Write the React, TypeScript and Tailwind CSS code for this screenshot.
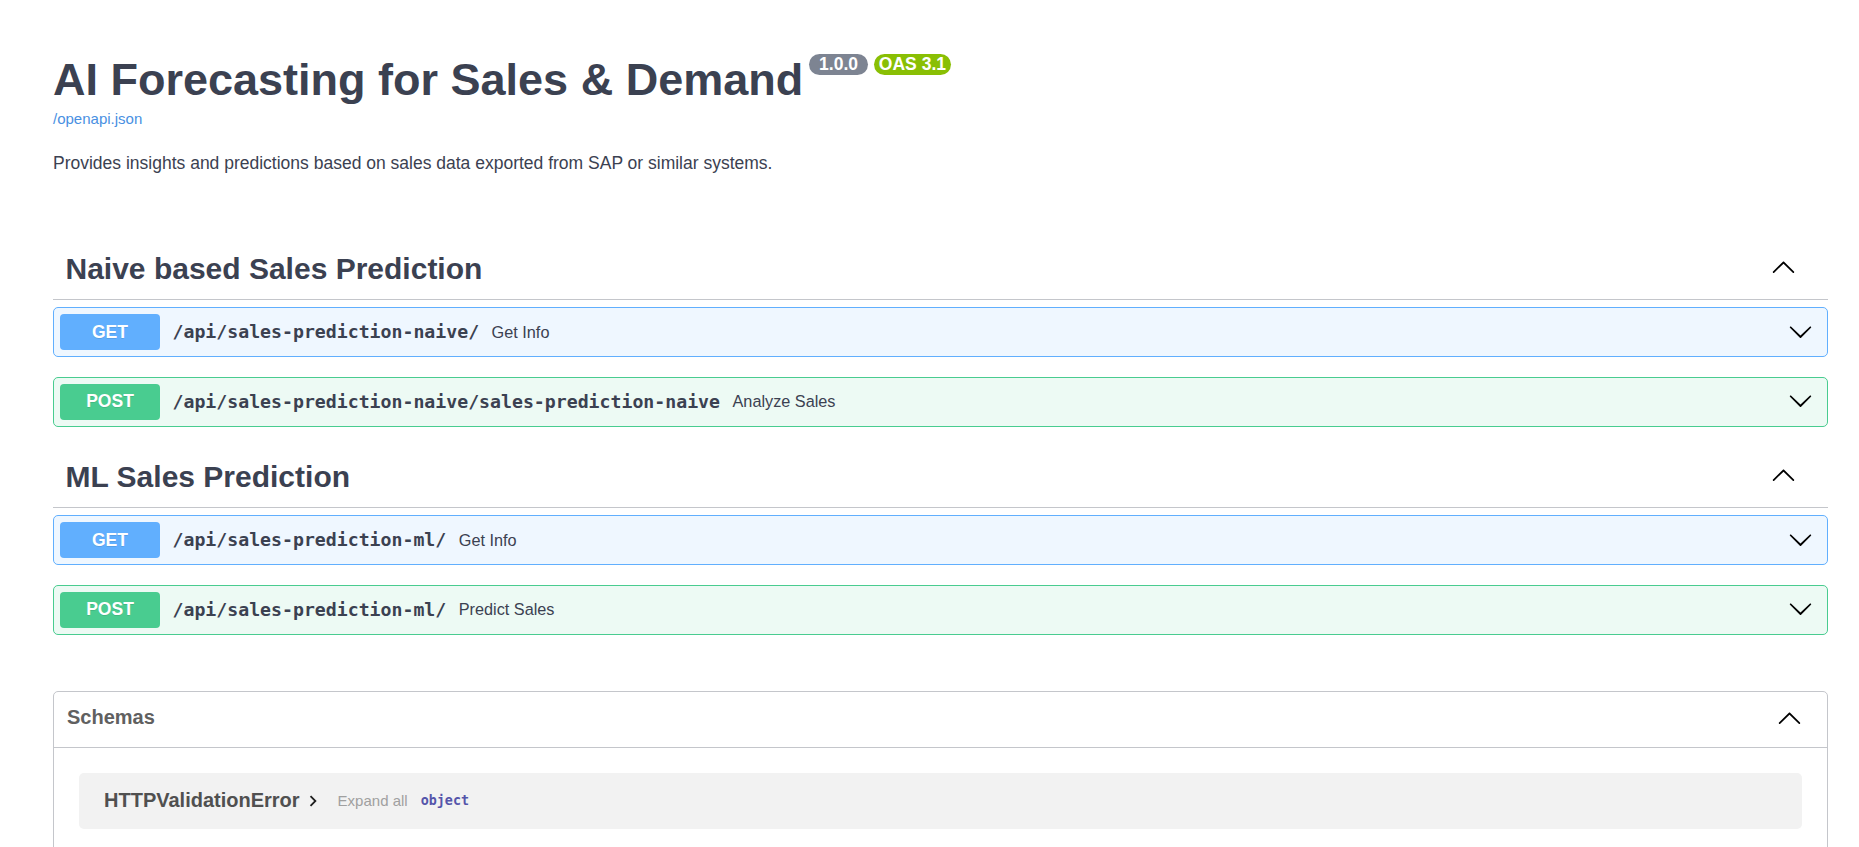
import React from "react";

// swagger-ish docs page for the forecasting api

type Op = {
  method: "GET" | "POST";
  path: string;
  summary: string;
};

type Tag = {
  name: string;
  ops: Op[];
};

const tags: Tag[] = [
  {
    name: "Naive based Sales Prediction",
    ops: [
      { method: "GET", path: "/api/sales-prediction-naive/", summary: "Get Info" },
      {
        method: "POST",
        path: "/api/sales-prediction-naive/sales-prediction-naive",
        summary: "Analyze Sales",
      },
    ],
  },
  {
    name: "ML Sales Prediction",
    ops: [
      { method: "GET", path: "/api/sales-prediction-ml/", summary: "Get Info" },
      { method: "POST", path: "/api/sales-prediction-ml/", summary: "Predict Sales" },
    ],
  },
];

const schemas = ["HTTPValidationError"];

const ArrowDown = ({ className = "" }: { className?: string }) => (
  <svg width="25" height="25" viewBox="0 0 20 20" fill="#000" className={`shrink-0 ${className}`}>
    <path d="M17.418 6.109c.272-.268.709-.268.979 0s.271.701 0 .969l-7.908 7.83c-.27.268-.707.268-.979 0l-7.908-7.83c-.27-.268-.27-.701 0-.969.271-.268.709-.268.979 0L10 13.25l7.418-7.141z" />
  </svg>
);

const ArrowUp = ({ className = "" }: { className?: string }) => (
  <svg width="25" height="25" viewBox="0 0 20 20" fill="#000" className={`shrink-0 ${className}`}>
    <path d="M17.418 14.908c.272.268.709.268.979 0s.271-.701 0-.969l-7.908-7.83c-.27-.268-.707-.268-.979 0l-7.908 7.83c-.27.268-.27.701 0 .969.271.268.709.268.979 0L10 7.757l7.418 7.151z" />
  </svg>
);

const ChevronRight = () => (
  <svg width="22" height="22" viewBox="0 0 24 24" fill="#1f1f1f" className="shrink-0 ml-[2px]">
    <path d="M10 6 8.59 7.41 13.17 12l-4.58 4.59L10 18l6-6z" />
  </svg>
);

function Operation({ op }: { op: Op }) {
  const isGet = op.method === "GET";
  return (
    <div
      className={`flex items-center h-[50px] mb-[19.5px] pl-[6px] pr-[14px] border rounded-[5px] ${
        isGet ? "border-[#61affe] bg-[#eff7ff]" : "border-[#49cc90] bg-[#edfaf4]"
      }`}
    >
      <span
        className={`w-[100px] h-[36px] flex items-center justify-center rounded-[4px] text-white font-bold text-[17.5px] [text-shadow:0_1px_0_rgba(0,0,0,0.1)] ${
          isGet ? "bg-[#61affe]" : "bg-[#49cc90]"
        }`}
      >
        {op.method}
      </span>
      <span className="px-[12.5px] font-['DejaVu_Sans_Mono',monospace] font-bold text-[18.2px] text-[#3b4151]">
        {op.path}
      </span>
      <span className="text-[16.25px] text-[#3b4151]">{op.summary}</span>
      <span className="ml-auto flex items-center">
        <ArrowDown className="-mt-[2px]" />
      </span>
    </div>
  );
}

function TagSection({ tag }: { tag: Tag }) {
  return (
    <div>
      <div className="flex items-center h-[62px] mb-[7px] pl-[12.5px] pr-[32px] border-b border-[#c4c6cb]">
        <h3 className="flex-1 text-[30px] font-bold text-[#3b4151] leading-[35px]">{tag.name}</h3>
        <ArrowUp className="-mt-[5px]" />
      </div>
      {tag.ops.map((op, i) => (
        <Operation key={i} op={op} />
      ))}
    </div>
  );
}

export default function App() {
  return (
    <div className="min-h-screen bg-white font-['Liberation_Sans',Arial,sans-serif] text-[#3b4151] pl-[53px] pr-[31px] pb-[60px]">
      {/* info block */}
      <div className="pt-[53.5px]">
        <div className="flex items-start">
          <h2 className="text-[45px] font-bold leading-[52px] text-[#3b4151]">
            AI Forecasting for Sales &amp; Demand
          </h2>
          <span className="ml-[6px] h-[21px] px-[5px] rounded-full bg-[#7d8492] text-white font-bold text-[17.5px] leading-[21px] whitespace-pre">
            {" 1.0.0 "}
          </span>
          <span className="ml-[6px] h-[21px] px-[5px] rounded-full bg-[#89bf04] text-white font-bold text-[17.5px] leading-[21px] whitespace-pre">
            OAS 3.1
          </span>
        </div>
        <a href="#" className="block mt-[4.5px] text-[15px] leading-[17px] text-[#4990e2]">
          /openapi.json
        </a>
        <p className="mt-[26px] text-[17.5px] leading-[20px] text-[#3b4151]">
          Provides insights and predictions based on sales data exported from SAP or similar systems.
        </p>
      </div>

      {/* operations */}
      <div className="mt-[65px]">
        {tags.map((t) => (
          <TagSection key={t.name} tag={t} />
        ))}
      </div>

      {/* schemas */}
      <section className="mt-[56px] border border-[#c4c6cb] rounded-[5px]">
        <div className="flex items-center h-[56px] pl-[13px] pr-[25px] border-b border-[#c4c6cb]">
          <span className="flex-1 text-[20px] font-bold text-[#606060] leading-[23px] pb-[4px]">Schemas</span>
          <ArrowUp className="-mt-[4px]" />
        </div>
        <div className="pt-[25px] px-[25px] pb-[25px] flex flex-col gap-[19px]">
          {schemas.map((s) => (
            <div key={s} className="flex items-center h-[56px] pl-[25px] rounded-[5px] bg-[#f2f2f2]">
              <span className="text-[20px] font-bold text-[#505050] leading-[23px]">{s}</span>
              <ChevronRight />
              <span className="ml-[14px] mt-[2px] text-[15px] text-[#a0a0a0]">Expand all</span>
              <span className="ml-[13px] mt-[2px] font-['DejaVu_Sans_Mono',monospace] font-bold text-[13.4px] text-[#5555aa]">
                object
              </span>
            </div>
          ))}
        </div>
      </section>
    </div>
  );
}
